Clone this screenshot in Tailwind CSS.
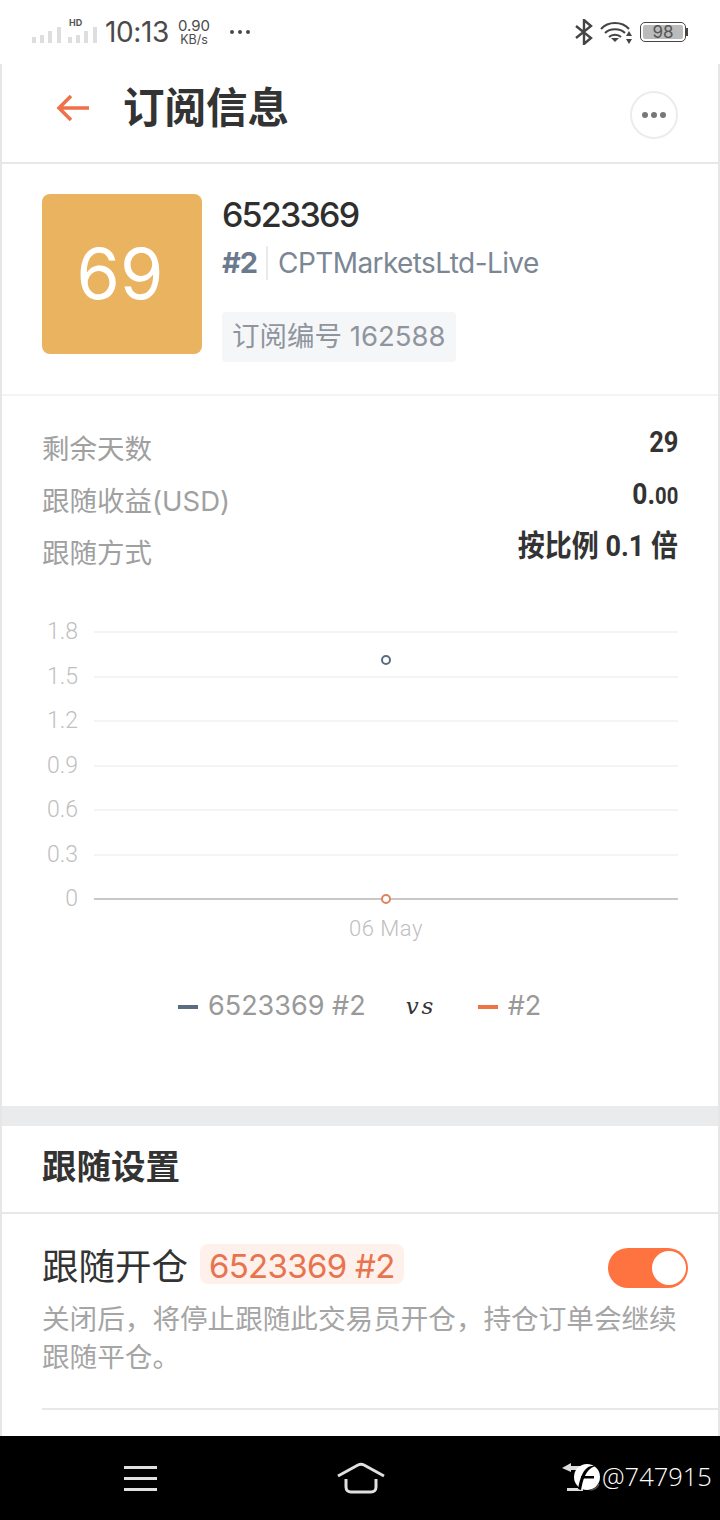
<!DOCTYPE html>
<html lang="zh-CN">
<head>
    <meta charset="UTF-8">
    <meta name="viewport" content="width=device-width, initial-scale=1.0">
    <title>订阅信息</title>
    <script src="https://cdn.jsdelivr.net/npm/@tailwindcss/browser@4"></script>
</head>
<body class="w-[720px] h-[1520px] overflow-hidden bg-white font-['Inter','Noto_Sans_CJK_SC',sans-serif]">
    <!-- status bar -->
    <div class="relative flex items-center h-16 pl-8 pr-8 text-[#4a4a4a]">
        <svg width="66" height="28" viewBox="0 0 66 28" class="mt-[-2px]" fill="#dedede">
            <rect x="0" y="20" width="4" height="6"/><rect x="8" y="18" width="4" height="8"/><rect x="16" y="14" width="4" height="12"/><rect x="25" y="10" width="4" height="16"/>
            <rect x="36" y="20" width="4" height="6"/><rect x="44" y="18" width="4" height="8"/><rect x="52" y="14" width="4" height="12"/><rect x="61" y="10" width="4" height="16"/>
            <text x="37" y="9" font-size="9" font-weight="700" fill="#555">HD</text>
        </svg>
        <span class="ml-[7px] w-[65px] text-[28px] leading-none tracking-[-0.4px] whitespace-nowrap">10:13</span>
        <div class="ml-2 w-8 flex flex-col items-center gap-[1px]">
            <span class="text-[15px] leading-[15px]">0.90</span>
            <span class="text-[12.5px] leading-[12px]">KB/s</span>
        </div>
        <div class="ml-[20px] flex gap-[4px]">
            <span class="w-1 h-1 rounded-full bg-[#4a4a4a]"></span>
            <span class="w-1 h-1 rounded-full bg-[#4a4a4a]"></span>
            <span class="w-1 h-1 rounded-full bg-[#4a4a4a]"></span>
        </div>
        <div class="ml-auto flex items-center">
            <svg width="18" height="26" viewBox="0 0 18 26" fill="none" stroke="#444" stroke-width="2.4">
                <path d="M1 7l15 12-7 6V1l7 6L1 19"/>
            </svg>
            <svg width="32" height="24" viewBox="0 0 32 24" fill="none" stroke="#444" class="ml-[7px]">
                <path d="M1 9C8 1 22 1 29 9" stroke-width="2"/>
                <path d="M5 13c5-5 15-5 20 0" stroke-width="2"/>
                <path d="M9 17c3-3 9-3 12 0" stroke-width="2"/>
                <path d="M11 18l4 4 4-4z" fill="#444" stroke="none"/>
                <path d="M29 11l3 5h-6zM29 24l3-5h-6z" fill="#444" stroke="none"/>
            </svg>
            <div class="ml-2 flex items-center">
                <div class="w-[46px] h-5 border border-[#444] rounded-[5px] p-[2px] flex">
                    <div class="flex-1 rounded-[2px] bg-[#bbbbbb] flex items-center justify-center text-[17px] leading-none text-[#555]">98</div>
                </div>
                <div class="w-[2px] h-2 bg-[#444]"></div>
            </div>
        </div>
    </div>

    <main class="h-[1372px] border-x-2 border-[#e6e6e6] overflow-hidden">
        <!-- header -->
        <div class="flex items-center h-[100px] border-b-2 border-[#e8e8e8] pl-[54px] pr-[40px]">
            <svg width="34" height="28" viewBox="0 0 34 28" fill="none" stroke="#f07048" stroke-width="3.5" class="mt-[-11px]">
                <path d="M33 14H3M15 2L3 14l12 12"/>
            </svg>
            <h1 class="ml-[33px] text-[41.5px] font-bold leading-none text-[#333] mt-[-9px] whitespace-nowrap">订阅信息</h1>
            <div class="ml-auto w-12 h-12 rounded-full border-2 border-[#ececec] flex items-center justify-center gap-[3px] mt-[3px]">
                <span class="w-[6px] h-[6px] rounded-full bg-[#777]"></span>
                <span class="w-[6px] h-[6px] rounded-full bg-[#777]"></span>
                <span class="w-[6px] h-[6px] rounded-full bg-[#777]"></span>
            </div>
        </div>

        <!-- profile -->
        <div class="flex h-[232px] pt-[30px] pl-[40px] border-b-2 border-[#f4f4f4]">
            <div class="w-40 h-40 pr-1 rounded-lg bg-[#e9b35f] flex items-center justify-center text-white text-[70px] leading-none">69</div>
            <div class="ml-5">
                <div class="text-[34px] leading-[42px] font-medium text-[#2e2e2e] tracking-[-1.8px]">6523369</div>
                <div class="flex items-center mt-[10px] h-[34px]">
                    <span class="text-[29px] font-bold text-[#6b7a8d] tracking-[-1px]">#2</span>
                    <span class="w-[2px] h-[34px] bg-[#e8eaed] ml-[9px] mr-[10px]"></span>
                    <span class="text-[28px] text-[#7b8794] tracking-[-0.6px]">CPTMarketsLtd-Live</span>
                </div>
                <div class="mt-[32px] w-[234px] h-[50px] flex items-center pl-[10px] bg-[#f5f6f8] rounded text-[27.5px] text-[#8e959e] whitespace-nowrap">订阅编号 162588</div>
            </div>
        </div>

        <!-- stats -->
        <div class="pl-[40px] pr-[40px] pt-[31px] h-[214px]">
            <div class="flex justify-between h-[52px]">
                <span class="text-[27.5px] leading-[44px] text-[#a0a0a0]">剩余天数</span>
                <span class="text-[30px] leading-[30px] font-bold text-[#333] font-['Roboto','Noto_Sans_CJK_SC',sans-serif] scale-x-[0.85] origin-right">29</span>
            </div>
            <div class="flex justify-between h-[52px]">
                <span class="text-[27.5px] leading-[44px] text-[#a0a0a0]">跟随收益(USD)</span>
                <span class="text-[30px] leading-[30px] font-bold text-[#333] font-['Roboto','Noto_Sans_CJK_SC',sans-serif] scale-x-[0.88] origin-right">0.<span class="text-[23px]">00</span></span>
            </div>
            <div class="flex justify-between h-[52px]">
                <span class="text-[27.5px] leading-[44px] text-[#a0a0a0]">跟随方式</span>
                <span class="text-[30px] leading-[30px] font-bold text-[#333] font-['Roboto','Noto_Sans_CJK_SC',sans-serif] scale-x-[0.9] origin-right whitespace-nowrap">按比例 0.1 倍</span>
            </div>
        </div>

        <!-- chart -->
        <div class="relative pr-[40px] text-[#c0c0c0] text-[23px] font-light font-['Roboto',sans-serif]">
            <div class="flex items-center h-[44.5px]"><span class="w-[76px] text-right">1.8</span><div class="ml-4 flex-1 h-[2px] bg-[#f4f4f4]"></div></div>
            <div class="flex items-center h-[44.5px]"><span class="w-[76px] text-right">1.5</span><div class="ml-4 flex-1 h-[2px] bg-[#f4f4f4]"></div></div>
            <div class="flex items-center h-[44.5px]"><span class="w-[76px] text-right">1.2</span><div class="ml-4 flex-1 h-[2px] bg-[#f4f4f4]"></div></div>
            <div class="flex items-center h-[44.5px]"><span class="w-[76px] text-right">0.9</span><div class="ml-4 flex-1 h-[2px] bg-[#f4f4f4]"></div></div>
            <div class="flex items-center h-[44.5px]"><span class="w-[76px] text-right">0.6</span><div class="ml-4 flex-1 h-[2px] bg-[#f4f4f4]"></div></div>
            <div class="flex items-center h-[44.5px]"><span class="w-[76px] text-right">0.3</span><div class="ml-4 flex-1 h-[2px] bg-[#f4f4f4]"></div></div>
            <div class="flex items-center h-[44.5px]"><span class="w-[76px] text-right">0</span><div class="ml-4 flex-1 h-[2px] bg-[#c8c8c8]"></div></div>
            <div class="absolute left-[379px] top-[45px] w-[10px] h-[10px] rounded-full border-2 border-[#5a6b82] bg-white"></div>
            <div class="absolute left-[379px] top-[284px] w-[10px] h-[10px] rounded-full border-2 border-[#e0835a] bg-white"></div>
            <div class="mt-[-10px] pl-[92px] text-center text-[22px] tracking-[0.5px]">06 May</div>
        </div>

        <!-- legend -->
        <div class="flex items-center mt-[42px] pl-[176px] h-10 text-[27px] text-[#999]">
            <span class="w-5 h-1 bg-[#5a6b82]"></span>
            <span class="ml-[10px]">6523369 #2</span>
            <span class="ml-[40px] w-8 text-[23px] italic tracking-[3px] text-[#333] font-['DejaVu_Serif',serif]">vs</span>
            <span class="ml-[40px] w-5 h-1 bg-[#ee7446]"></span>
            <span class="ml-[10px]">#2</span>
        </div>

        <div class="mt-[79px] h-5 bg-[#e9ebed]"></div>

        <!-- follow settings -->
        <div class="flex items-center h-[88px] pl-[40px] border-b-2 border-[#e8e8e8]">
            <h2 class="text-[34.5px] font-bold text-[#333] leading-none mt-[-2px]">跟随设置</h2>
        </div>
        <div class="ml-[40px] pt-[30px] h-[196px] border-b-2 border-[#e8e8e8]">
            <div class="flex items-center h-10 pr-[30px]">
                <span class="mt-[6px] text-[36.5px] leading-10 text-[#333] whitespace-nowrap">跟随开仓</span>
                <span class="ml-3 h-10 px-[9px] pt-[6px] flex items-center rounded-lg bg-[#fef0ea] text-[33px] text-[#e8734f] tracking-[-0.7px] whitespace-nowrap">6523369 #2</span>
                <div class="ml-auto self-start relative w-20 h-10 mt-1 rounded-full bg-[#ff7340]">
                    <div class="absolute right-[2px] top-[3px] w-[34px] h-[34px] rounded-full bg-white"></div>
                </div>
            </div>
            <p class="mt-4 w-[640px] text-[27.6px] leading-[38px] text-[#a5a5a5]">关闭后，将停止跟随此交易员开仓，持仓订单会继续跟随平仓。</p>
        </div>
    </main>

    <!-- nav bar -->
    <div class="relative flex items-center h-[84px] bg-black">
        <div class="ml-[124px] flex flex-col gap-2">
            <span class="w-[33px] h-[3px] bg-[#e0e0e0]"></span>
            <span class="w-[33px] h-[3px] bg-[#e0e0e0]"></span>
            <span class="w-[33px] h-[3px] bg-[#e0e0e0]"></span>
        </div>
        <svg width="48" height="32" viewBox="0 0 48 32" fill="none" stroke="#e0e0e0" stroke-width="3" class="ml-[180px]">
            <path d="M1 14L21 3c2-1 4-1 6 0l20 11"/>
            <path d="M9 17v8c0 3 2 5 5 5h20c3 0 5-2 5-5v-8"/>
        </svg>
        <div class="absolute left-[562px] top-[24px] flex items-center text-white font-['Open_Sans',sans-serif]">
            <svg width="40" height="34" viewBox="0 0 40 34">
                <path d="M0 8 9 3v3h10v4H9v2zM5 28h16v3H5z" fill="#ddd"/>
                <circle cx="25" cy="17" r="13" fill="#fff"/>
                <path d="M19 30c2-10 4-20 14-24h-4c-8 2-11 12-13 23z" fill="#000"/>
                <path d="M19 16h13v2.5H19z" fill="#000"/>
                <path d="M28 30a10 10 0 0 0 9-6" fill="none" stroke="#555" stroke-width="1.5"/>
            </svg>
            <span class="text-[25.5px] leading-none font-light">@747915</span>
        </div>
    </div>
</body>
</html>
